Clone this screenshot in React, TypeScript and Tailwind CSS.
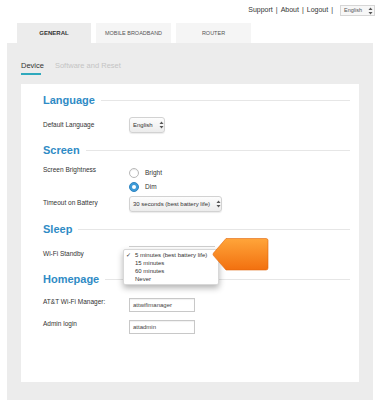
import React from 'react';

// Flechas dobles del <select> estilo Mac
function Arrows() {
  return (
    <svg width="5" height="8" viewBox="0 0 5 8" className="flex-shrink-0">
      <path d="M2.5 0.5 L4.5 3 L0.5 3 Z" fill="#555" />
      <path d="M2.5 7.5 L4.5 5 L0.5 5 Z" fill="#555" />
    </svg>
  );
}

function Select({ value, className }: { value: string; className: string }) {
  return (
    <div
      className={`flex items-center gap-[3px] pl-[3px] pr-[3px] rounded-[3px] border border-[#d2d2d2] bg-gradient-to-b from-[#fdfdfd] to-[#ececec] shadow-[0_1px_1px_rgba(0,0,0,0.08)] text-[6px] text-[#333] ${className}`}
    >
      <span className="whitespace-nowrap">{value}</span>
      <span className="ml-auto w-px h-[9px] bg-[#dcdcdc]" />
      <Arrows />
    </div>
  );
}

function Heading({ title }: { title: string }) {
  return (
    <div className="flex items-center h-[20px] gap-[6px] pr-[9px]">
      <span className="text-[11px] font-bold text-[#2f8bc5] leading-none">{title}</span>
      <span className="flex-1 h-px bg-[#e6e6e6]" />
    </div>
  );
}

function Label({ children, className = '' }: { children: React.ReactNode; className?: string }) {
  return <span className={`w-[86px] flex-shrink-0 text-[6.5px] text-[#333] ${className}`}>{children}</span>;
}

function Radio({ checked, label }: { checked?: boolean; label: string }) {
  return (
    <div className="flex items-center h-[14px] gap-[6px]">
      {checked ? (
        <span className="w-[10px] h-[10px] rounded-full bg-[#3e9bd8] border border-[#2f86c2] flex items-center justify-center">
          <span className="w-[4px] h-[4px] rounded-full bg-white" />
        </span>
      ) : (
        <span className="w-[10px] h-[10px] rounded-full bg-white border border-[#b8b8b8] shadow-[inset_0_1px_1px_rgba(0,0,0,0.08)]" />
      )}
      <span className="text-[6.5px] text-[#333]">{label}</span>
    </div>
  );
}

function TextInput({ value }: { value: string }) {
  return (
    <div className="w-[66px] h-[14px] border border-[#c8c8c8] bg-white flex items-center px-[3px] text-[6px] text-[#444] shadow-[inset_0_1px_1px_rgba(0,0,0,0.06)]">
      {value}
    </div>
  );
}

export default function App() {
  return (
    <div className="w-[380px] h-[400px] bg-white overflow-hidden flex flex-col font-['Liberation_Sans',Arial,sans-serif]">
      {/* barra superior */}
      <div className="flex items-center justify-end h-[20px] pr-[5px] pt-[1px] gap-[3px] text-[7px] text-[#333]">
        <span>Support</span>
        <span>|</span>
        <span>About</span>
        <span>|</span>
        <span>Logout</span>
        <span>|</span>
        <div className="ml-[4px] w-[35px] h-[11px] flex items-center gap-[3px] px-[3px] border border-[#d6d6d6] bg-[#f7f7f7] text-[5.5px] text-[#555]">
          <span>English</span>
          <span className="ml-auto" />
          <Arrows />
        </div>
      </div>

      {/* pestañas */}
      <div className="flex gap-[5px] ml-[17px] mt-[3px]">
        <div className="w-[74px] h-[20px] bg-[#ececec] flex items-center justify-center text-[6px] font-bold text-[#333]">GENERAL</div>
        <div className="w-[75px] h-[20px] bg-[#f5f5f5] flex items-center justify-center text-[5.5px] text-[#555]">MOBILE BROADBAND</div>
        <div className="w-[75px] h-[20px] bg-[#f5f5f5] flex items-center justify-center text-[5.5px] text-[#555]">ROUTER</div>
      </div>

      {/* panel gris */}
      <div className="mx-[7px] flex-1 bg-[#ececec] flex flex-col">
        <div className="flex items-start gap-[11px] ml-[14px] mt-[17px] h-[24px] text-[7.5px]">
          <div className="flex flex-col">
            <span className="text-[#333]">Device</span>
            <span className="mt-[2px] h-[1.5px] w-[20px] bg-[#2fa9bd]" />
          </div>
          <span className="text-[#c4c4c4]">Software and Reset</span>
        </div>

        {/* tarjeta blanca */}
        <div className="relative mx-[14px] h-[298px] bg-white pl-[22px] pt-[6px]">
          <Heading title="Language" />
          <div className="flex items-center h-[20px] mt-[5px]">
            <Label>Default Language</Label>
            <Select value="English" className="w-[36px] h-[16px]" />
          </div>

          <div className="mt-[5px]">
            <Heading title="Screen" />
          </div>
          <div className="flex mt-[6px]">
            <Label className="-mt-[1px]">Screen Brightness</Label>
            <div className="flex flex-col">
              <Radio label="Bright" />
              <Radio checked label="Dim" />
            </div>
          </div>
          <div className="flex items-center h-[16px] mt-[2px]">
            <Label className="-mt-[3px]">Timeout on Battery</Label>
            <Select value="30 seconds (best battery life)" className="w-[93px] h-[16px]" />
          </div>

          <div className="mt-[7px]">
            <Heading title="Sleep" />
          </div>
          <div className="flex items-center h-[20px] mt-[5px]">
            <Label>Wi-Fi Standby</Label>
            <div className="w-[86px] h-[16px] border-t border-[#cfcfcf]" />
          </div>

          <div className="mt-[5px]">
            <Heading title="Homepage" />
          </div>
          <div className="flex items-start h-[14px] mt-[9px]">
            <Label className="-mt-[1px]">AT&amp;T Wi-Fi Manager:</Label>
            <TextInput value="attwifimanager" />
          </div>
          <div className="flex items-start h-[14px] mt-[8px]">
            <Label className="-mt-[1px]">Admin login</Label>
            <TextInput value="attadmin" />
          </div>

          {/* lista desplegable abierta */}
          <div className="absolute left-[102px] top-[165px] w-[96px] h-[36px] bg-white rounded-[2px] border border-[#d8d8d8] shadow-[0_3px_6px_rgba(0,0,0,0.3)] py-[1px] text-[6px] text-[#333] leading-[8px]">
            <div className="flex">
              <span className="w-[11px] pl-[2px]">✓</span>
              <span>5 minutes (best battery life)</span>
            </div>
            <div className="pl-[11px]">15 minutes</div>
            <div className="pl-[11px]">60 minutes</div>
            <div className="pl-[11px]">Never</div>
          </div>

          {/* flecha naranja */}
          <svg className="absolute left-[189px] top-[153px]" width="60" height="35" viewBox="0 0 60 35">
            <defs>
              <linearGradient id="og" x1="0" y1="0" x2="0" y2="1">
                <stop offset="0" stopColor="#ffa53a" />
                <stop offset="1" stopColor="#f2700f" />
              </linearGradient>
            </defs>
            <path
              d="M16 1.5 L56 1.5 Q58 1.5 58 3.5 L58 31 Q58 33 56 33 L16 33 L3.5 18.6 Q2.5 17.3 3.5 16 Z"
              fill="url(#og)"
              stroke="#e0650c"
              strokeWidth="0.6"
            />
          </svg>
        </div>
      </div>
    </div>
  );
}
